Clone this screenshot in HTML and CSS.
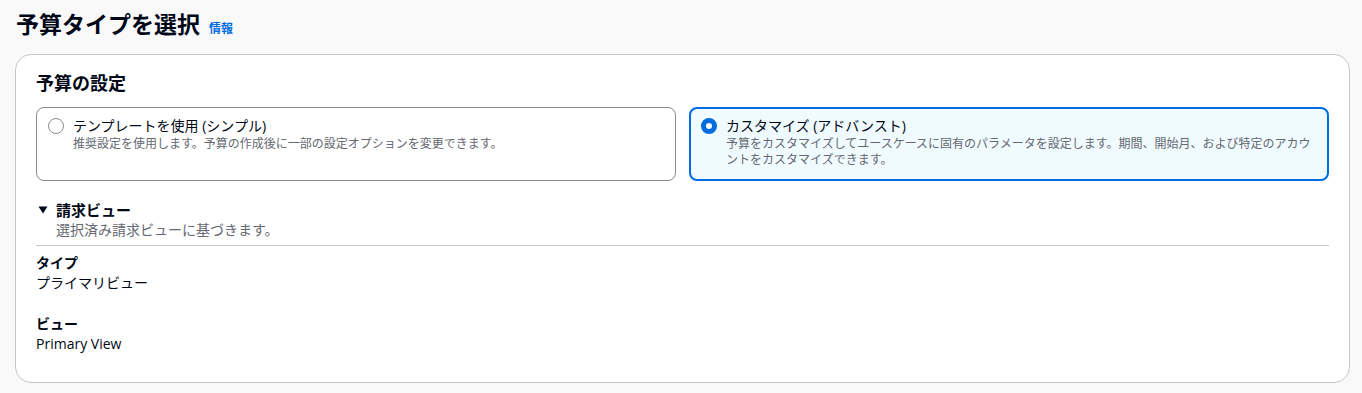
FILE: index.html
```html
<!DOCTYPE html>
<html lang="ja">
<head>
<meta charset="utf-8">
<link rel="stylesheet" href="styles.css">
</head>
<body>
<div class="page">
  <div class="page-header">
    <h1 class="page-title">予算タイプを選択</h1>
    <a class="info-link" href="#">情報</a>
  </div>
  <div class="container">
    <h2 class="container-title">予算の設定</h2>
    <div class="tiles">
      <label class="tile">
        <span class="radio"></span>
        <span class="tile-text">
          <span class="tile-label">テンプレートを使用 (シンプル)</span>
          <span class="tile-desc">推奨設定を使用します。予算の作成後に一部の設定オプションを変更できます。</span>
        </span>
      </label>
      <label class="tile tile-selected">
        <span class="radio radio-checked"></span>
        <span class="tile-text">
          <span class="tile-label">カスタマイズ (アドバンスト)</span>
          <span class="tile-desc">予算をカスタマイズしてユースケースに固有のパラメータを設定します。期間、開始月、および特定のアカウントをカスタマイズできます。</span>
        </span>
      </label>
    </div>
    <div class="expandable">
      <div class="exp-header">
        <svg class="caret" width="10" height="8" viewBox="0 0 10 8"><path d="M0.5 0.5 H9.5 L5 7.5 Z" fill="#000716"/></svg>
        <span class="exp-title">請求ビュー</span>
      </div>
      <div class="exp-desc">選択済み請求ビューに基づきます。</div>
    </div>
    <div class="divider"></div>
    <dl class="kv">
      <div class="kv-item">
        <dt>タイプ</dt>
        <dd>プライマリビュー</dd>
      </div>
      <div class="kv-item">
        <dt>ビュー</dt>
        <dd>Primary View</dd>
      </div>
    </dl>
  </div>
</div>
</body>
</html>
```
FILE: styles.css
```css
* { box-sizing: border-box; }
html, body {
  margin: 0;
  padding: 0;
  background: #f9f9fa;
}
body {
  font-family: "Open Sans", "Noto Sans CJK JP", sans-serif;
  color: #000716;
  font-size: 14px;
  line-height: 20px;
}
.page {
  padding: 8px 12px 10px 15px;
}
.page-header {
  display: flex;
  align-items: baseline;
  gap: 9px;
  padding-left: 1px;
  height: 46px;
}
.page-title {
  margin: 0;
  font-size: 23px;
  line-height: 30px;
  font-weight: 700;
  font-family: "Noto Sans CJK JP", sans-serif;
}
.info-link {
  font-size: 12px;
  font-weight: 700;
  color: #006ce0;
  text-decoration: none;
  font-family: "Noto Sans CJK JP", sans-serif;
}
.container {
  background: #ffffff;
  border: 1px solid #c6c6cd;
  border-radius: 16px;
  padding: 16px 20px 28px 20px;
}
.container-title {
  margin: 0 0 14px 0;
  font-size: 18px;
  line-height: 22px;
  font-weight: 700;
  font-family: "Noto Sans CJK JP", sans-serif;
}
.tiles {
  display: grid;
  grid-template-columns: 1fr 1fr;
  gap: 13px;
}
.tile {
  display: flex;
  gap: 9px;
  border: 1px solid #8c8c94;
  border-radius: 8px;
  padding: 8px 12px 12px 11px;
  background: #ffffff;
}
.tile-selected {
  border: 2px solid #006ce0;
  background: #f0fbff;
  padding: 7px 11px 11px 10px;
}
.radio {
  flex: none;
  width: 16px;
  height: 16px;
  margin-top: 2px;
  border-radius: 50%;
  border: 1px solid #8c8c94;
  background: #ffffff;
}
.radio-checked {
  border: 5px solid #006ce0;
  background: #ffffff;
}
.tile-text {
  display: flex;
  flex-direction: column;
}
.tile-label {
  font-size: 14px;
  line-height: 20px;
}
.tile-desc {
  font-size: 12px;
  line-height: 16px;
  color: #656871;
}
.expandable {
  margin-top: 19px;
  margin-left: 2px;
}
.exp-header {
  display: flex;
  align-items: center;
  gap: 8px;
}
.caret {
  display: block;
}
.exp-title {
  font-size: 15px;
  line-height: 20px;
  font-weight: 700;
}
.exp-desc {
  padding-left: 18px;
  font-size: 14px;
  line-height: 20px;
  color: #656871;
}
.divider {
  margin-top: 5px;
  border-top: 1px solid #c6c6cd;
}
.kv {
  margin: 7px 0 0 0;
  display: flex;
  flex-direction: column;
  gap: 21px;
}
.kv-item dt {
  font-weight: 700;
  font-size: 14px;
  line-height: 20px;
}
.kv-item dd {
  margin: 0;
  font-size: 14px;
  line-height: 20px;
}
```
